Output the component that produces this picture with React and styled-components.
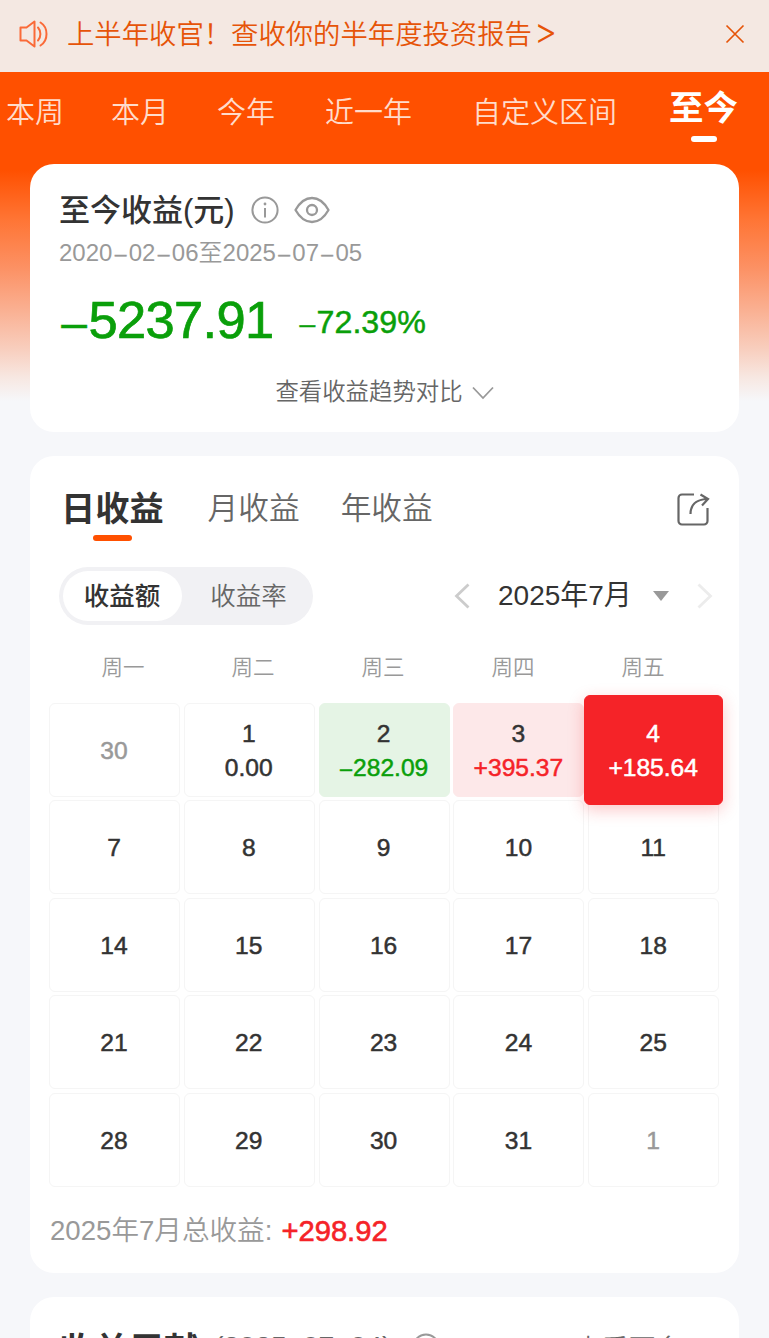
import React, { useState } from 'react';
import styled, { createGlobalStyle } from 'styled-components';

const GlobalStyle = createGlobalStyle`
  * {
    box-sizing: border-box;
  }

  body {
    margin: 0;
    background: #f6f7fa;
    color: #333;
    font-family: 'Liberation Sans', 'Noto Sans CJK SC', sans-serif;
    overflow: hidden;
  }

  button {
    padding: 0;
    border: none;
    background: none;
    font-family: inherit;
    cursor: pointer;
  }

  svg {
    display: block;
    flex-shrink: 0;
  }
`;

const Page = styled.div`
  width: 769px;
  height: 1338px;
  overflow: hidden;
  background: linear-gradient(
    180deg,
    #ff5000 0,
    #ff5000 170px,
    #ff7535 220px,
    #fc9164 268px,
    #fab092 310px,
    #f8cfbf 350px,
    #f7e7e1 377px,
    #f6f7fa 401px
  );
`;

const Notice = styled.div`
  display: flex;
  align-items: center;
  height: 72px;
  padding: 0 24px 5px 19px;
  background: #f4e8e2;
  color: #e65408;
`;

const NoticeText = styled.p`
  flex: 1;
  margin: 2px 0 0 17px;
  font-size: 27.35px;
  font-weight: 350;
  line-height: 40px;
  white-space: nowrap;
`;

const Arrow = styled.span`
  margin-left: 2px;
  font-family: Inter, sans-serif;
  font-size: 36px;
  line-height: 30px;
  font-weight: 300;
`;

const RangeTabs = styled.nav`
  display: flex;
  height: 92px;
  padding-left: 6px;
`;

const RangeTab = styled.button`
  display: flex;
  flex-direction: column;
  align-items: center;
  flex-shrink: 0;
  margin-right: ${(props) => props.$gap}px;
  padding-top: ${(props) => (props.$active ? 16 : 21)}px;
  color: ${(props) => (props.$active ? '#fff' : '#ffdccb')};
  font-size: ${(props) => (props.$active ? 34.5 : 29)}px;
  font-weight: ${(props) => (props.$active ? 700 : 350)};
  line-height: 40px;

  &::after {
    content: '';
    display: ${(props) => (props.$active ? 'block' : 'none')};
    width: 26px;
    height: 6px;
    margin-top: 7.5px;
    border-radius: 3px;
    background: #fff;
  }
`;

const Card = styled.section`
  width: 709px;
  height: ${(props) => props.$height}px;
  margin: 0 0 24px 30px;
  border-radius: 24px;
  background: #fff;
`;

const Dash = styled.span`
  margin: 0 ${(props) => props.$space || 0.05}em;
  font-size: 0.88em;
  -webkit-text-stroke: 0.4px;
`;

const SummaryCard = styled(Card)`
  padding: 26px 30px 0 29px;
`;

const SummaryHead = styled.div`
  display: flex;
  align-items: center;
  height: 40px;
`;

const SummaryTitle = styled.h1`
  width: 178px;
  margin: 0 14px 0 0;
  padding-top: 2px;
  font-size: 31px;
  font-weight: 500;
  line-height: 40px;
  white-space: nowrap;
`;

const DateRange = styled.p`
  margin: 8px 0 0;
  color: #999;
  font-size: 24px;
  font-weight: 350;
  line-height: 30px;
  white-space: nowrap;
`;

const Amounts = styled.div`
  display: flex;
  align-items: flex-start;
  margin-top: 21px;
  color: #0a9f0a;
  line-height: 60px;
`;

const Amount = styled.span`
  width: 239px;
  font-size: 52.5px;
  letter-spacing: -0.7px;
  -webkit-text-stroke: 0.7px;
`;

const Rate = styled.span`
  padding-top: 2px;
  font-size: 32.2px;
  -webkit-text-stroke: 0.5px;
`;

const TrendButton = styled.button`
  display: flex;
  align-items: center;
  gap: 9px;
  height: 36px;
  margin: 21px auto 0;
  padding-left: 1px;
  color: #666;
  font-size: 23.4px;
  font-weight: 350;
  line-height: 36px;

  svg {
    margin-top: 1px;
  }
`;

const CalendarCard = styled(Card)`
  padding: 28px 19px 0;
`;

const ProfitTabs = styled.div`
  display: flex;
  height: 62px;
  padding: 0 10px 0 12px;
`;

const ProfitTab = styled.button`
  display: flex;
  flex-direction: column;
  align-items: center;
  margin-right: ${(props) => (props.$active ? 44 : 41)}px;
  color: ${(props) => (props.$active ? '#333' : '#666')};
  font-size: ${(props) => (props.$active ? 34.2 : 30.7)}px;
  font-weight: ${(props) => (props.$active ? 700 : 350)};
  line-height: 50px;

  &::after {
    content: '';
    display: ${(props) => (props.$active ? 'block' : 'none')};
    width: 39px;
    height: 6px;
    margin-top: 1px;
    border-radius: 3px;
    background: #ff5000;
  }
`;

const ShareButton = styled.button`
  height: 36px;
  margin: 7px 0 0 auto;
`;

const Controls = styled.div`
  display: flex;
  align-items: center;
  height: 58px;
  margin-top: 21px;
  padding: 0 7px 0 10px;
`;

const Switch = styled.div`
  display: flex;
  width: 254px;
  height: 58px;
  padding: 4px;
  border-radius: 29px;
  background: #f1f1f4;
`;

const SwitchOption = styled.button`
  width: ${(props) => (props.$active ? 119 : 127)}px;
  padding: 0 ${(props) => (props.$active ? 1 : 0)}px 4px ${(props) => (props.$active ? 0 : 6)}px;
  border-radius: 25px;
  background: ${(props) => (props.$active ? '#fff' : 'transparent')};
  color: ${(props) => (props.$active ? '#333' : '#666')};
  font-size: 25.5px;
  font-weight: ${(props) => (props.$active ? 500 : 350)};
`;

const MonthPicker = styled.div`
  display: flex;
  align-items: center;
  margin-left: auto;
`;

const Month = styled.span`
  width: 134px;
  margin: 0 21px 0 28px;
  padding-top: 1px;
  font-size: 28px;
  font-weight: 400;
  line-height: 40px;
  white-space: nowrap;
`;

const Weekdays = styled.div`
  display: grid;
  grid-template-columns: repeat(5, 130px);
  height: 40px;
  margin: 23px 0 15px 9px;
  color: #999;
  font-size: 21.5px;
  font-weight: 350;
  line-height: 40px;
  text-align: center;
`;

const DayGrid = styled.div`
  display: grid;
  grid-template-columns: repeat(5, 131px);
  grid-auto-rows: 94px;
  gap: 3.6px 3.8px;
`;

const cellTones = {
  plain: { background: '#fff', border: '#f5f5f5', day: '#333', value: '#333' },
  muted: { background: '#fff', border: '#f5f5f5', day: '#999', value: '#999' },
  loss: { background: '#e5f4e5', border: '#e5f4e5', day: '#333', value: '#0a9f0a' },
  gain: { background: '#fde8e9', border: '#fde8e9', day: '#333', value: '#f52328' },
  selected: { background: '#f52328', border: '#f52328', day: '#fff', value: '#fff' },
};

const DayCell = styled.button`
  display: flex;
  flex-direction: column;
  align-items: center;
  justify-content: center;
  z-index: ${(props) => (props.$tone === 'selected' ? 1 : 0)};
  margin: ${(props) => (props.$tone === 'selected' ? '-8px -4px' : 0)};
  padding: 2px 1px 0 0;
  border: 1px solid ${(props) => cellTones[props.$tone].border};
  border-radius: 6px;
  background: ${(props) => cellTones[props.$tone].background};
  box-shadow: ${(props) =>
    props.$tone === 'selected' ? '0 5px 16px rgba(245, 35, 40, 0.25)' : 'none'};
  color: ${(props) => cellTones[props.$tone].day};
  font-size: 24.6px;
  line-height: 34px;
  -webkit-text-stroke: 0.5px;
`;

const DayValue = styled.span`
  height: 34px;
  color: ${(props) => cellTones[props.$tone].value};
`;

const Total = styled.p`
  display: flex;
  margin: 24px 0 0 1px;
  color: #999;
  font-size: 27.6px;
  font-weight: 350;
  line-height: 40px;
`;

const TotalValue = styled.span`
  margin-left: 9px;
  color: #f52328;
  font-size: 29.2px;
  -webkit-text-stroke: 0.6px;
`;

const ContributionCard = styled(Card)`
  display: flex;
  align-items: flex-start;
  padding: 29px 29px 0;
  line-height: 50px;
`;

const ContributionTitle = styled.h2`
  margin: 0 15px 0 0;
  font-size: 35px;
  font-weight: 700;
`;

const ContributionDate = styled.span`
  width: 180px;
  margin: -5px 18px 0 0;
  color: #666;
  font-size: 28.5px;
  white-space: nowrap;
`;

const ContributionInfo = styled.span`
  margin-top: 7px;
`;

const MoreLink = styled.span`
  margin: -1px 4px 0 auto;
  color: #666;
  font-size: 27px;
  font-weight: 350;
`;

const SpeakerIcon = () => (
  <svg width="31" height="30" viewBox="0 0 31 30" fill="none" stroke="#fa6a38" strokeWidth="2">
    <path d="M1.500 8.500H7.500L15.500 2.500v25L7.500 21.500h-6z" strokeLinejoin="round" />
    <path d="M19 8.500c3.200 3.500 3.200 9.500 0 13M21.500 3.500c8 5 8 18 0 23" strokeLinecap="round" />
  </svg>
);

const CloseIcon = () => (
  <svg width="20" height="20" viewBox="0 0 20 20" stroke="#e65408" strokeWidth="1.700">
    <path d="M1.500 1.500l17 17M18.500 1.500l-17 17" />
  </svg>
);

const InfoIcon = () => (
  <svg width="28" height="28" viewBox="0 0 28 28" fill="none" stroke="#999" strokeWidth="2">
    <circle cx="14" cy="14" r="12.600" />
    <path d="M14 12v9.500" />
    <circle cx="14" cy="8" r="1.400" fill="#999" stroke="none" />
  </svg>
);

const EyeIcon = () => (
  <svg width="36" height="28" viewBox="0 0 36 28" fill="none" stroke="#999" strokeWidth="2.300">
    <path d="M1.500 14C6 6 12 2 18 2s12 4 16.500 12c-4.500 8-10.500 12-16.500 12S6 22 1.500 14z" strokeLinejoin="round" />
    <circle cx="18" cy="14" r="5" />
  </svg>
);

const ShareIcon = () => (
  <svg width="34" height="34" viewBox="0 0 34 34" fill="none" stroke="#666" strokeWidth="2.200">
    <path d="M18 2.500H6A3.500 3.500 0 0 0 2.500 6v23A3.500 3.500 0 0 0 6 32.500h22a3.500 3.500 0 0 0 3.500-3.500V16" />
    <path d="M14.500 22C14.500 12 20 7.500 32 7M24.500 2.500l7.500 4.500-6 6.500" />
  </svg>
);

// splits a figure on its dashes so that each one can be spaced on its own
const Figure = ({ text, space }) =>
  text.split(/(–)/).map((part, index) =>
    part === '–' ? (
      <Dash key={index} $space={space}>
        –
      </Dash>
    ) : (
      part
    )
  );

const weekdays = ['周一', '周二', '周三', '周四', '周五'];

const rangeTabs = [
  { label: '本周', gap: 47 },
  { label: '本月', gap: 48 },
  { label: '今年', gap: 50 },
  { label: '近一年', gap: 60 },
  { label: '自定义区间', gap: 52 },
  { label: '至今', gap: 0 },
];

const days = [
  { day: 30, tone: 'muted' },
  { day: 1, value: '0.00' },
  { day: 2, value: '–282.09', tone: 'loss' },
  { day: 3, value: '+395.37', tone: 'gain' },
  { day: 4, value: '+185.64', tone: 'selected' },
  ...[7, 8, 9, 10, 11, 14, 15, 16, 17, 18, 21, 22, 23, 24, 25, 28, 29, 30, 31].map((day) => ({ day })),
  { day: 1, tone: 'muted' },
];

const App = () => {
  const [range, setRange] = useState('至今');
  const [period, setPeriod] = useState('日收益');
  const [mode, setMode] = useState('收益额');
  const [showNotice, setShowNotice] = useState(true);

  return (
    <>
      <GlobalStyle />
      <Page>
        {showNotice && (
          <Notice>
            <SpeakerIcon />
            <NoticeText>
              上半年收官！查收你的半年度投资报告<Arrow>&gt;</Arrow>
            </NoticeText>
            <button aria-label="关闭" onClick={() => setShowNotice(false)}>
              <CloseIcon />
            </button>
          </Notice>
        )}

        <RangeTabs>
          {rangeTabs.map(({ label, gap }) => (
            <RangeTab key={label} $gap={gap} $active={range === label} onClick={() => setRange(label)}>
              {label}
            </RangeTab>
          ))}
        </RangeTabs>

        {/* 收益汇总 */}
        <SummaryCard $height={267.5}>
          <SummaryHead>
            <SummaryTitle>至今收益(元)</SummaryTitle>
            <InfoIcon />
            <svg width="15" height="1" />
            <EyeIcon />
          </SummaryHead>
          <DateRange>
            <Figure text="2020–02–06至2025–07–05" space={0.11} />
          </DateRange>
          <Amounts>
            <Amount>
              <Figure text="–5237.91" />
            </Amount>
            <Rate>
              <Figure text="–72.39%" />
            </Rate>
          </Amounts>
          <TrendButton>
            查看收益趋势对比
            <svg width="22" height="14" viewBox="0 0 22 14" fill="none" stroke="#999" strokeWidth="1.800">
              <path d="M1 1.500l10 10.500 10-10.500" />
            </svg>
          </TrendButton>
        </SummaryCard>

        {/* 收益日历 */}
        <CalendarCard $height={817}>
          <ProfitTabs>
            {['日收益', '月收益', '年收益'].map((label) => (
              <ProfitTab key={label} $active={period === label} onClick={() => setPeriod(label)}>
                {label}
              </ProfitTab>
            ))}
            <ShareButton aria-label="分享">
              <ShareIcon />
            </ShareButton>
          </ProfitTabs>
          <Controls>
            <Switch>
              {['收益额', '收益率'].map((label) => (
                <SwitchOption key={label} $active={mode === label} onClick={() => setMode(label)}>
                  {label}
                </SwitchOption>
              ))}
            </Switch>
            <MonthPicker>
              <svg width="16" height="26" viewBox="0 0 16 26" fill="none" stroke="#ccc" strokeWidth="2.800">
                <path d="M14.500 1.500L2.500 13l12 11.500" />
              </svg>
              <Month>2025年7月</Month>
              <svg width="16" height="10" viewBox="0 0 16 10" fill="#999">
                <path d="M0 0h16L8 10z" />
              </svg>
              <svg width="44" height="26" viewBox="0 0 44 26" fill="none" stroke="#ececec" strokeWidth="2.800">
                <path d="M29.500 1.500l12 11.500-12 11.500" />
              </svg>
            </MonthPicker>
          </Controls>
          <Weekdays>
            {weekdays.map((name) => (
              <span key={name}>{name}</span>
            ))}
          </Weekdays>
          <DayGrid>
            {days.map(({ day, value, tone = 'plain' }, index) => (
              <DayCell key={index} $tone={tone}>
                {day}
                {value && (
                  <DayValue $tone={tone}>
                    <Figure text={value} />
                  </DayValue>
                )}
              </DayCell>
            ))}
          </DayGrid>
          <Total>
            2025年7月总收益:<TotalValue>+298.92</TotalValue>
          </Total>
        </CalendarCard>

        {/* 收益贡献 */}
        <ContributionCard $height={200}>
          <ContributionTitle>收益贡献</ContributionTitle>
          <ContributionDate>(2025–07–04)</ContributionDate>
          <ContributionInfo>
            <InfoIcon />
          </ContributionInfo>
          <MoreLink>查看更多 &gt;</MoreLink>
        </ContributionCard>
      </Page>
    </>
  );
};

export default App;
